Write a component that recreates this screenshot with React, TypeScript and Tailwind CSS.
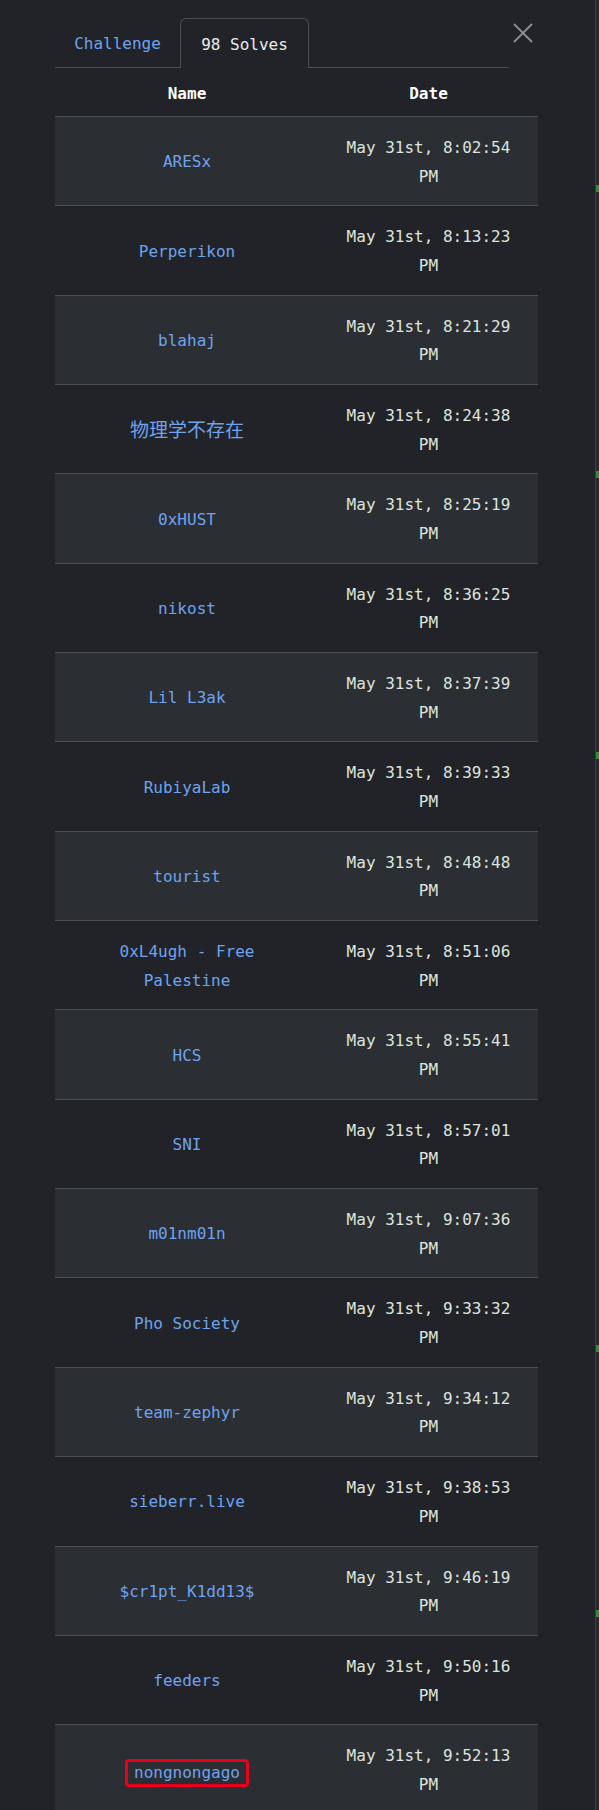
import React from 'react';

const solves = [
  { name: 'ARESx', date: 'May 31st, 8:02:54 PM' },
  { name: 'Perperikon', date: 'May 31st, 8:13:23 PM' },
  { name: 'blahaj', date: 'May 31st, 8:21:29 PM' },
  { name: '物理学不存在', date: 'May 31st, 8:24:38 PM', cjk: true },
  { name: '0xHUST', date: 'May 31st, 8:25:19 PM' },
  { name: 'nikost', date: 'May 31st, 8:36:25 PM' },
  { name: 'Lil L3ak', date: 'May 31st, 8:37:39 PM' },
  { name: 'RubiyaLab', date: 'May 31st, 8:39:33 PM' },
  { name: 'tourist', date: 'May 31st, 8:48:48 PM' },
  { name: '0xL4ugh - Free Palestine', date: 'May 31st, 8:51:06 PM' },
  { name: 'HCS', date: 'May 31st, 8:55:41 PM' },
  { name: 'SNI', date: 'May 31st, 8:57:01 PM' },
  { name: 'm01nm01n', date: 'May 31st, 9:07:36 PM' },
  { name: 'Pho Society', date: 'May 31st, 9:33:32 PM' },
  { name: 'team-zephyr', date: 'May 31st, 9:34:12 PM' },
  { name: 'sieberr.live', date: 'May 31st, 9:38:53 PM' },
  { name: '$cr1pt_K1dd13$', date: 'May 31st, 9:46:19 PM' },
  { name: 'feeders', date: 'May 31st, 9:50:16 PM' },
  { name: 'nongnongago', date: 'May 31st, 9:52:13 PM', marked: true },
];

const marks = [185, 471, 752, 1345, 1610];

const App = () => {
  return (
    <div
      className="flex h-[1810px] overflow-hidden bg-[#212328] text-[16px]"
      style={{ fontFamily: '"DejaVu Sans Mono", "Noto Sans CJK SC", monospace' }}
    >
      <div className="relative flex-1">
        {/* Close button */}
        <button className="absolute left-[513px] top-[23px] h-[20px] w-[20px] text-[#8c8f93]">
          <svg viewBox="0 0 20 20" className="h-[20px] w-[20px]" fill="none" stroke="currentColor" strokeWidth={1.8}>
            <path d="M1 1L19 19M19 1L1 19" />
          </svg>
        </button>

        <div className="ml-[55px] w-[483px] pt-[18px]">
          {/* Tabs */}
          <div className="flex h-[50px] w-[454px] border-b border-[#4b4f54]">
            <div className="flex w-[125px] items-center justify-center pt-[2px] text-[#6ea3ef]">Challenge</div>
            <div className="-mb-px flex w-[129px] items-center justify-center rounded-t-md border border-b-0 border-[#4b4f54] bg-[#212328] pt-[2px] text-[#e9ecef]">
              98 Solves
            </div>
          </div>

          {/* Header */}
          <div className="flex h-[48px] items-center pt-[3px] font-bold text-white">
            <div className="w-[264px] text-center">Name</div>
            <div className="w-[219px] text-center">Date</div>
          </div>

          {/* Rows */}
          {solves.map((s, i) => (
            <div
              key={s.name}
              className={`flex border-t border-[#4b4f54] pt-[17px] pb-[14px] leading-[28.67px] ${
                i % 2 === 0 ? 'bg-[#2b2e33]' : 'bg-[#212328]'
              }`}
            >
              <div className="flex w-[264px] items-center justify-center px-5 text-center text-[#6ea3ef]">
                {s.marked ? (
                  <span className="mt-[5px] rounded-[4px] border-[3px] border-[#e8001c] px-[6px] leading-[22px]">{s.name}</span>
                ) : (
                  <span className={s.cjk ? 'text-[19px]' : ''}>{s.name}</span>
                )}
              </div>
              <div className="w-[219px] px-5 text-center text-[#dde4df]">{s.date}</div>
            </div>
          ))}
        </div>
      </div>

      {/* Scrollbar strip */}
      <div className="relative w-[4px] border-l border-[#3c3f45] bg-[#26292d]">
        {marks.map((m) => (
          <div key={m} className="absolute left-0 h-[7px] w-[3px] bg-[#2f8f3a]" style={{ top: m }} />
        ))}
      </div>
    </div>
  );
};

export default App;
